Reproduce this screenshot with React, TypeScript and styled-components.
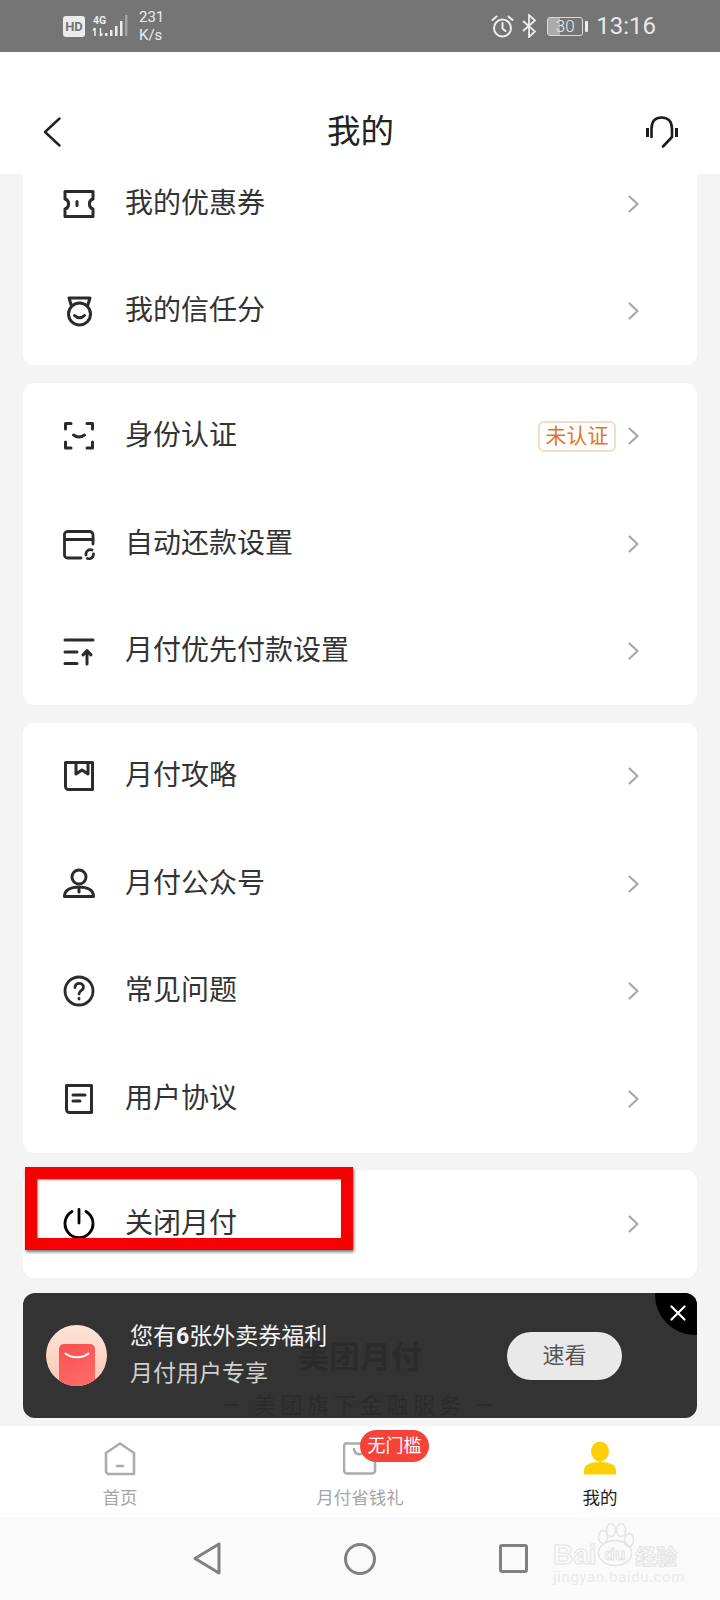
import React from "react";
import styled, { createGlobalStyle } from "styled-components";

const GlobalStyle = createGlobalStyle`
    html, body {
        margin: 0;
        padding: 0;
        background: #fff;
    }
    * {
        box-sizing: border-box;
    }
`;

const CJK = `Roboto, "Noto Sans CJK SC", sans-serif`;

const Page = styled.div`
    position: relative;
    width: 720px;
    height: 1600px;
    display: flex;
    flex-direction: column;
    overflow: hidden;
    font-family: ${CJK};
    background: #f4f4f4;
`;
const StatusBar = styled.div`
    height: 52px;
    flex: none;
    background: #757575;
    color: #ececec;
    display: flex;
    align-items: center;
    justify-content: space-between;
    padding: 0 64px 0 63px;
`;
const StatusGroup = styled.div`
    display: flex;
    align-items: center;
`;
const HdBadge = styled.span`
    width: 22px;
    height: 21px;
    border-radius: 3px;
    background: #ececec;
    color: #757575;
    font-size: 13px;
    font-weight: 700;
    display: flex;
    align-items: center;
    justify-content: center;
    margin-right: 7px;
`;
const Speed = styled.span`
    font-size: 15px;
    line-height: 18px;
    margin-left: 11px;
    width: 30px;
`;
const Bluetooth = styled.svg`
    margin-left: 8px;
`;
const Battery = styled.span`
    width: 36px;
    height: 19px;
    border: 1px solid #d8d8d8;
    border-radius: 3px;
    margin: 0 2px 0 11px;
    font-size: 17px;
    font-weight: 300;
    line-height: 17px;
    text-align: center;
    background: linear-gradient(90deg, #ababab 36%, transparent 36%);
`;
const BatteryNub = styled.span`
    width: 3px;
    height: 11px;
    background: #ececec;
    border-radius: 1px;
    margin-right: 8px;
`;
const Clock = styled.span`
    font-size: 24px;
    font-weight: 400;
    color: #e8e8e8;
`;
const Header = styled.header`
    height: 122px;
    flex: none;
    background: #fff;
    display: grid;
    grid-template-columns: 1fr auto 1fr;
    align-items: center;
    padding: 38px 42px 0 43px;
    svg:last-child {
        justify-self: end;
    }
`;
const Title = styled.h1`
    margin: 0;
    font-size: 33.5px;
    line-height: 44px;
    font-weight: 400;
    color: #222;
`;
const Scroller = styled.main`
    flex: 1;
    min-height: 0;
    overflow: hidden;
    padding: 0 23px;
`;
const ScrollInner = styled.div`
    margin-top: -24px;
    display: flex;
    flex-direction: column;
    gap: 17.5px;
`;
const Card = styled.section`
    background: #fff;
    border-radius: 11px;
`;
const Row = styled.div`
    height: 107.5px;
    display: flex;
    align-items: center;
    padding: 0 58px 0 40px;
`;
const IconBox = styled.span<{ $dark?: boolean }>`
    width: 32px;
    height: 32px;
    flex: none;
    color: ${(p) => (p.$dark ? "#000" : "#2b2b2b")};
    margin-right: 30px;
    svg {
        display: block;
    }
`;
const RowText = styled.span`
    flex: 1;
    font-size: 28px;
    line-height: 36px;
    color: #333;
`;
const Tag = styled.span`
    width: 78px;
    height: 31px;
    border: 2px solid #f4dcc6;
    border-radius: 6px;
    color: #e0752a;
    font-size: 21px;
    line-height: 27px;
    text-align: center;
    margin-right: 12px;
`;
const Footer = styled.div`
    display: flex;
    flex-direction: column;
    align-items: center;
    margin-top: 41px;
    color: #a4a4a4;
`;
const FooterTitle = styled.div`
    font-size: 31px;
    line-height: 44px;
    font-weight: 700;
`;
const FooterSub = styled.div`
    font-size: 22px;
    line-height: 30px;
    letter-spacing: 4.5px;
    margin-top: 11px;
`;
const Highlight = styled.div`
    position: absolute;
    left: 25px;
    top: 1167px;
    width: 328px;
    height: 83px;
    border: 12px solid #f60000;
    box-shadow: 1px 2px 3px rgba(0, 0, 0, 0.55), inset 1px 1px 2px rgba(0, 0, 0, 0.45);
`;
const Banner = styled.aside`
    position: absolute;
    left: 23px;
    top: 1293px;
    width: 674px;
    height: 125px;
    border-radius: 12px;
    background: rgba(30, 30, 30, 0.9);
    overflow: hidden;
    display: flex;
    align-items: center;
    padding: 0 75px 0 23px;
`;
const BagCircle = styled.div`
    position: relative;
    width: 61px;
    height: 61px;
    flex: none;
    border-radius: 50%;
    overflow: hidden;
    background: linear-gradient(180deg, #fde4d8, #fcc6b4);
    margin-right: 23px;
`;
const Bag = styled.div`
    position: absolute;
    left: 13px;
    top: 19px;
    width: 36px;
    height: 46px;
    border-radius: 5px;
    background: linear-gradient(160deg, #fa5050, #fe6f68);
    svg {
        display: block;
        margin: 8px auto 0;
    }
`;
const BannerText = styled.div`
    flex: 1;
`;
const BannerTitle = styled.div`
    font-size: 23px;
    line-height: 30px;
    color: #f4f4f4;
    b {
        font-weight: 700;
    }
`;
const BannerSub = styled.div`
    font-size: 23px;
    line-height: 30px;
    color: #cfcfcf;
    margin-top: 7px;
`;
const WatchButton = styled.div`
    width: 115px;
    height: 48px;
    border-radius: 24px;
    background: #e9e9e9;
    color: #555;
    font-size: 22px;
    line-height: 48px;
    text-align: center;
`;
const CloseCorner = styled.div`
    position: absolute;
    right: 0;
    top: 0;
    width: 42px;
    height: 42px;
    background: #000;
    border-bottom-left-radius: 40px;
    display: flex;
    align-items: center;
    justify-content: center;
    padding: 0 0 3px 3px;
`;
const TabBar = styled.nav`
    height: 91px;
    flex: none;
    background: #fff;
    display: grid;
    grid-template-columns: repeat(3, 1fr);
`;
const Tab = styled.div`
    display: flex;
    flex-direction: column;
    align-items: center;
    padding-top: 16px;
`;
const TabIcon = styled.div`
    position: relative;
    width: 34px;
    height: 34px;
    svg {
        display: block;
    }
`;
const TabLabel = styled.span<{ $active?: boolean }>`
    font-size: 17.5px;
    line-height: 24px;
    margin-top: 10px;
    color: ${(p) => (p.$active ? "#222" : "#a5a5a5")};
`;
const TabBadge = styled.span`
    position: absolute;
    left: 17px;
    top: -12px;
    width: 69px;
    height: 32px;
    border-radius: 16px;
    background: #f5433a;
    color: #fff;
    font-size: 18px;
    line-height: 31px;
    text-align: center;
`;
const NavBar = styled.div`
    position: relative;
    height: 83px;
    flex: none;
    background: #fafafa;
    display: flex;
    align-items: center;
    justify-content: center;
    gap: 123px;
`;
const Watermark = styled.div`
    position: absolute;
    left: 553px;
    top: 5px;
    width: 130px;
    height: 62px;
`;
const WaterLogo = styled.div`
    position: absolute;
    left: 0;
    top: 19px;
    display: flex;
    align-items: center;
    height: 28px;
    font-size: 28px;
    font-weight: 700;
    white-space: nowrap;
    color: #fafafa;
    -webkit-text-stroke: 1px #e4e4e4;
    font-family: "Liberation Sans", "Noto Sans CJK SC", sans-serif;
`;
const WaterDu = styled.span`
    margin: 0 10px 0 8px;
    font-size: 17px;
`;
const WaterCn = styled.span`
    font-size: 21px;
`;
const WaterUrl = styled.div`
    position: absolute;
    left: 0;
    top: 46px;
    font-size: 15px;
    line-height: 18px;
    white-space: nowrap;
    color: #eaeaea;
    letter-spacing: 0.6px;
`;
const WaterPaw = styled.svg`
    position: absolute;
    left: 40px;
    top: 0;
`;

const Line = ({ children, size = 32, sw = 2.6 }: { children: React.ReactNode; size?: number; sw?: number }) => (
    <svg width={size} height={size} viewBox="0 0 32 32" fill="none" stroke="currentColor" strokeWidth={sw} strokeLinecap="round" strokeLinejoin="round">
        {children}
    </svg>
);

const icons: Record<string, React.ReactNode> = {
    coupon: (
        <Line sw={3}>
            <path d="M2 3.500h28v7.500c-2.600.6-3.600 2.600-3.600 5s1 4.400 3.600 5v7.500H2V21c2.600-.6 3.600-2.600 3.600-5S4.600 11.600 2 11z" />
            <path d="M14 13.500v4" />
        </Line>
    ),
    medal: (
        <Line sw={3}>
            <path d="M6 3h21l-2.500 8M6 3l2.500 8" />
            <circle cx="16.500" cy="19" r="11" />
            <path d="M11.500 20.500c3 3 7 3 10 0" />
        </Line>
    ),
    face: (
        <Line sw={3}>
            <path d="M8 3.500H2.500V9M24 3.500h5.500V9M2.500 22v6h5.500M29.500 22v6H24" />
            <path d="M10.500 15c3.500 2.500 7.500 2.500 11 0" />
        </Line>
    ),
    card: (
        <Line sw={2.8}>
            <path d="M30 16V7a3.500 3.500 0 0 0-3.500-3.500h-22A3 3 0 0 0 1.500 7v20a3 3 0 0 0 3 3H18" />
            <path d="M2 11.500h28" />
            <path d="M23 27a4.500 4.500 0 0 1 6-5M30.500 26a4.500 4.500 0 0 1-6 4.500" />
        </Line>
    ),
    sort: (
        <Line sw={3}>
            <path d="M2 5h28M2 17h12M2 28.500h12" />
            <path d="M24 29V16M20 20l4-4.500 4 4.500" />
        </Line>
    ),
    book: (
        <Line sw={3}>
            <path d="M2.500 2.500h27v27h-24a3 3 0 0 1-3-3z" />
            <path d="M13 3v11l6-4 6 4V3" />
        </Line>
    ),
    person: (
        <Line sw={3}>
            <circle cx="16" cy="9" r="7" />
            <path d="M1.500 28.500c0-6.500 6-9.500 14.500-9.500s14.500 3 14.500 9.500z" />
            <path d="M16 21v3" />
        </Line>
    ),
    help: (
        <Line sw={2.8}>
            <circle cx="16" cy="16" r="14" />
            <path d="M12 12.500c0-5.500 8.500-5.500 8.500 0 0 3-4.500 3-4.500 6.500" />
            <path d="M16 23.500v.5" />
        </Line>
    ),
    doc: (
        <Line sw={3}>
            <path d="M3.500 2.500h25v27h-22a3 3 0 0 1-3-3z" />
            <path d="M10 12h12M10 18h7" />
        </Line>
    ),
    power: (
        <Line sw={2.8}>
            <path d="M16 1.500V15" />
            <path d="M9 3.500a14 14 0 1 0 14 0" />
        </Line>
    ),
};

const Chevron = () => (
    <svg width="11" height="18" viewBox="0 0 11 18" fill="none" stroke="#a8a8a8" strokeWidth="2.200" strokeLinecap="round" strokeLinejoin="round">
        <path d="M1.500 1.500 9.500 9l-8 7.500" />
    </svg>
);

const MenuRow = ({ icon, text, tag }: { icon: string; text: string; tag?: string }) => (
    <Row>
        <IconBox $dark={icon === "power"}>{icons[icon]}</IconBox>
        <RowText>{text}</RowText>
        {tag && <Tag>{tag}</Tag>}
        <Chevron />
    </Row>
);

const groups = [
    [
        { icon: "coupon", text: "我的优惠券" },
        { icon: "medal", text: "我的信任分" },
    ],
    [
        { icon: "face", text: "身份认证", tag: "未认证" },
        { icon: "card", text: "自动还款设置" },
        { icon: "sort", text: "月付优先付款设置" },
    ],
    [
        { icon: "book", text: "月付攻略" },
        { icon: "person", text: "月付公众号" },
        { icon: "help", text: "常见问题" },
        { icon: "doc", text: "用户协议" },
    ],
    [{ icon: "power", text: "关闭月付" }],
];

const App: React.FunctionComponent = () => {
    return (
        <Page>
            <GlobalStyle />
            <StatusBar>
                <StatusGroup>
                    <HdBadge>HD</HdBadge>
                    <svg width="36" height="24" viewBox="0 0 36 24" fill="#ececec">
                        <text x="1" y="9.500" fontSize="10.500" fontWeight="700" fontFamily="Roboto, sans-serif">4G</text>
                        <path d="M3 14v8M3 14 1 16.500M8.500 22v-8M8.500 22l2-2.500" stroke="#ececec" strokeWidth="1.500" fill="none" />
                        <rect x="13" y="19" width="2.500" height="3" />
                        <rect x="18" y="16" width="2.500" height="6" />
                        <rect x="23" y="12" width="2.500" height="10" />
                        <rect x="28" y="7" width="2.500" height="15" />
                        <rect x="33" y="1" width="2.500" height="21" opacity="0.4" />
                    </svg>
                    <Speed>231<br />K/s</Speed>
                </StatusGroup>
                <StatusGroup>
                    <svg width="23" height="23" viewBox="0 0 23 23" fill="none" stroke="#ececec" strokeWidth="2" strokeLinecap="round">
                        <circle cx="11.500" cy="13" r="8.500" />
                        <path d="M11.500 8v5.500l3 2.500M1.500 5l4-3.500M21.500 5l-4-3.500" />
                    </svg>
                    <Bluetooth width="14" height="24" viewBox="0 0 14 24" fill="none" stroke="#ececec" strokeWidth="1.800">
                        <path d="M1 7l12 10.500-6 5.500V1l6 5.500L1 17" />
                    </Bluetooth>
                    <Battery>30</Battery>
                    <BatteryNub />
                    <Clock>13:16</Clock>
                </StatusGroup>
            </StatusBar>
            <Header>
                <svg width="18" height="30" viewBox="0 0 18 30" fill="none" stroke="#222" strokeWidth="2.400" strokeLinecap="round" strokeLinejoin="round">
                    <path d="M16.500 1.500 2 15l14.500 13.500" />
                </svg>
                <Title>我的</Title>
                <svg width="32" height="32" viewBox="0 0 32 32" fill="none" stroke="#1c1c1c" strokeWidth="2.600" strokeLinecap="round" strokeLinejoin="round">
                    <path d="M5.500 21V13C5.500 5 9.500 1.500 15.500 1.500S26 5 26 13v8l-9 9.500" />
                    <path d="M1.500 12v9M30.500 12v9" strokeWidth="3" strokeLinecap="butt" />
                </svg>
            </Header>
            <Scroller>
                <ScrollInner>
                    {groups.map((rows, i) => (
                        <Card key={i}>
                            {rows.map((r) => (
                                <MenuRow key={r.text} {...r} />
                            ))}
                        </Card>
                    ))}
                    <Footer>
                        <FooterTitle>美团月付</FooterTitle>
                        <FooterSub>— 美团旗下金融服务 —</FooterSub>
                    </Footer>
                </ScrollInner>
            </Scroller>
            <TabBar>
                <Tab>
                    <TabIcon>
                        <svg width="34" height="34" viewBox="0 0 34 34" fill="none" stroke="#acacac" strokeWidth="2.600" strokeLinecap="round" strokeLinejoin="round">
                            <path d="M3 11 17 1.500 31 11v21H6a3 3 0 0 1-3-3z" />
                            <path d="M14 24h6" />
                        </svg>
                    </TabIcon>
                    <TabLabel>首页</TabLabel>
                </Tab>
                <Tab>
                    <TabIcon>
                        <svg width="34" height="34" viewBox="0 0 34 34" fill="none" stroke="#acacac" strokeWidth="2.600" strokeLinecap="round" strokeLinejoin="round">
                            <path d="M5 1.500h27v27a3 3 0 0 1-3 3H4a3 3 0 0 1-3-3V5a3 3 0 0 1 4-3.500z" />
                            <path d="M11 7c1 7 10 7 12 0" />
                        </svg>
                        <TabBadge>无门槛</TabBadge>
                    </TabIcon>
                    <TabLabel>月付省钱礼</TabLabel>
                </Tab>
                <Tab>
                    <TabIcon>
                        <svg width="34" height="34" viewBox="0 0 34 34" fill="#ffcf06">
                            <ellipse cx="17" cy="9.500" rx="9" ry="10" />
                            <path d="M1 32.500V28c0-5 6-8 16-8s16 3 16 8v4.500z" />
                        </svg>
                    </TabIcon>
                    <TabLabel $active>我的</TabLabel>
                </Tab>
            </TabBar>
            <NavBar>
                <svg width="28" height="33" viewBox="0 0 28 33" fill="none" stroke="#808080" strokeWidth="3" strokeLinejoin="round">
                    <path d="M26 2v29L2 16.500z" />
                </svg>
                <svg width="32" height="32" viewBox="0 0 32 32" fill="none" stroke="#808080" strokeWidth="3">
                    <circle cx="16" cy="16" r="14.500" />
                </svg>
                <svg width="29" height="29" viewBox="0 0 29 29" fill="none" stroke="#808080" strokeWidth="3" strokeLinejoin="round">
                    <rect x="1.500" y="1.500" width="26" height="26" rx="1.500" />
                </svg>
                <Watermark>
                    <WaterPaw width="48" height="46" viewBox="0 0 48 46" fill="none" stroke="#e4e4e4" strokeWidth="1.500">
                        <ellipse cx="10" cy="15" rx="4.500" ry="6.500" />
                        <ellipse cx="18" cy="8" rx="4.500" ry="6.500" />
                        <ellipse cx="28" cy="8" rx="4.500" ry="6.500" />
                        <ellipse cx="36" cy="18" rx="4.500" ry="6.500" />
                        <ellipse cx="22" cy="31" rx="16.500" ry="12.500" />
                    </WaterPaw>
                    <WaterLogo>Bai<WaterDu>du</WaterDu><WaterCn>经验</WaterCn></WaterLogo>
                    <WaterUrl>jingyan.baidu.com</WaterUrl>
                </Watermark>
            </NavBar>
            <Highlight />
            <Banner>
                <BagCircle>
                    <Bag>
                        <svg width="26" height="10" viewBox="0 0 26 10" fill="none" stroke="#fff" strokeWidth="2" strokeLinecap="round">
                            <path d="M1.500 1.500c6 5 17 5 23 0" />
                        </svg>
                    </Bag>
                </BagCircle>
                <BannerText>
                    <BannerTitle>您有<b>6</b>张外卖券福利</BannerTitle>
                    <BannerSub>月付用户专享</BannerSub>
                </BannerText>
                <WatchButton>速看</WatchButton>
                <CloseCorner>
                    <svg width="16" height="16" viewBox="0 0 16 16" fill="none" stroke="#fff" strokeWidth="2.200" strokeLinecap="round">
                        <path d="M1.500 1.500l13 13M14.500 1.500l-13 13" />
                    </svg>
                </CloseCorner>
            </Banner>
        </Page>
    );
};

export default App;
